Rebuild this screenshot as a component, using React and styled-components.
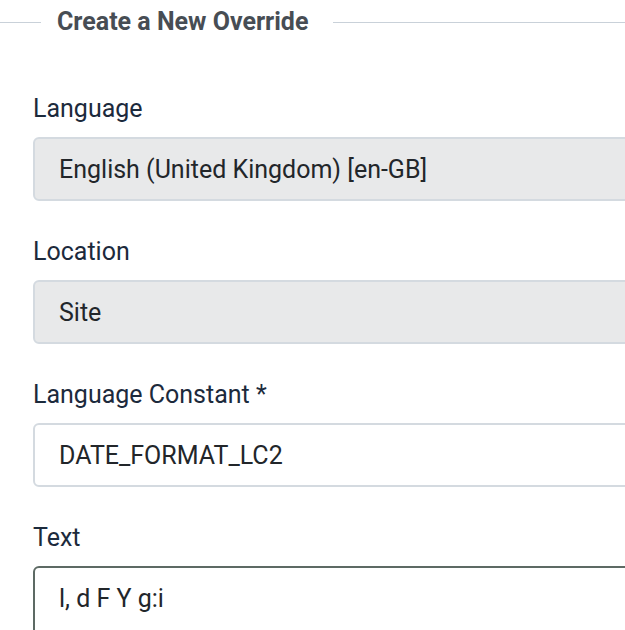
import React from 'react'
import styled, { createGlobalStyle } from 'styled-components'

const GlobalStyle = createGlobalStyle`
  html, body {
    margin: 0;
    padding: 0;
    background: #fff;
    overflow: hidden;
  }
  body {
    font-family: Roboto, "Noto Sans", Arial, sans-serif;
  }
`

const Fieldset = styled.fieldset`
  width: 900px;
  margin: 4px 0 0 0;
  padding: 0 0 0 33px;
  border: 0;
  border-top: 1px solid #c9d1d9;
  min-width: 0;
`

const Legend = styled.legend`
  margin-left: 8px;
  padding: 0 25px 0 16px;
  font-size: 25px;
  line-height: 36px;
  font-weight: 700;
  color: #474d54;
`

const Group = styled.div`
  margin-top: ${(p) => p.first ? '51px' : '33px'};
`

const Label = styled.label`
  display: block;
  font-size: 25px;
  line-height: 36px;
  color: #1c2a3c;
  margin-bottom: 10px;
`

const Field = styled.div`
  box-sizing: border-box;
  height: 64px;
  width: 100%;
  display: flex;
  align-items: center;
  padding: 0 24px;
  font-size: 25px;
  color: #22262a;
  background: ${(p) => p.disabled ? '#e8e9ea' : '#fff'};
  border: 2px solid ${(p) => p.dark ? '#5d6a64' : '#d4dae0'};
  border-radius: 6px;
`

const TextArea = styled(Field)`
  height: 120px;
  align-items: flex-start;
  padding-top: 16px;
`

export default function App() {
  return (
    <>
      <GlobalStyle />
      <Fieldset>
        <Legend>Create a New Override</Legend>
        <Group first>
          <Label>Language</Label>
          <Field disabled>English (United Kingdom) [en-GB]</Field>
        </Group>
        <Group>
          <Label>Location</Label>
          <Field disabled>Site</Field>
        </Group>
        <Group>
          <Label>Language Constant *</Label>
          <Field>DATE_FORMAT_LC2</Field>
        </Group>
        <Group>
          <Label>Text</Label>
          <TextArea dark>l, d F Y g:i</TextArea>
        </Group>
      </Fieldset>
    </>
  )
}
